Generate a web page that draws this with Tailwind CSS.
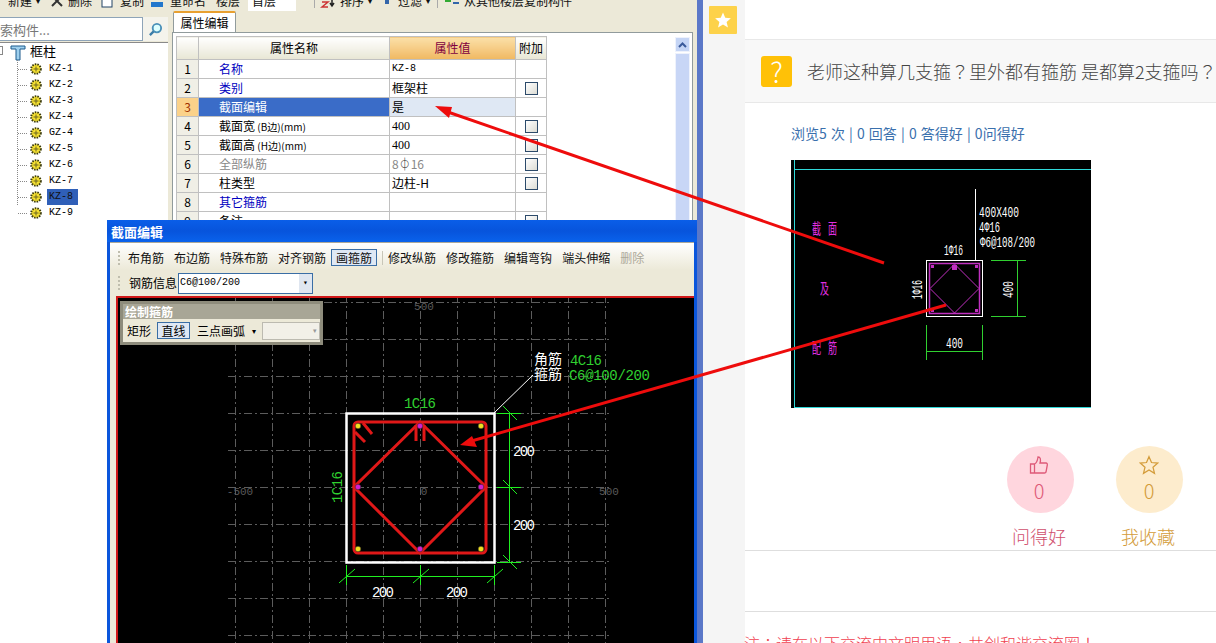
<!DOCTYPE html>
<html lang="zh-CN">
<head>
<meta charset="UTF-8">
<title>截面编辑</title>
<script src="https://cdn.jsdelivr.net/npm/@tailwindcss/browser@4"></script>
</head>
<body class="bg-white">
<svg class="hidden"><symbol id="gear" viewBox="0 0 12 12"><circle cx="6" cy="6" r="4.800" fill="#f5e030" stroke="#3a3a10" stroke-width="2" stroke-dasharray="1.500 1.100"/><path d="M3.500 6h5M6 3.500v5" stroke="#6a6420"/></symbol></svg>
<div class="relative flex w-[1216px] h-[643px] overflow-hidden text-[12px] leading-none text-black [font-family:'Noto_Sans_CJK_SC',sans-serif]">

  <!-- software screenshot -->
  <div class="relative w-[697px] h-full shrink-0 bg-[#ece9d8] overflow-hidden">
    <!-- top toolbar, cut off by the window edge -->
    <div class="h-[11px] overflow-hidden bg-[#ece9d8]">
      <div class="flex items-center h-px whitespace-nowrap text-[#111]">
        <span class="ml-[8px]">新建</span><span class="ml-[4px] text-[8px]">▾</span>
        <svg class="ml-[10px] w-[14px] h-[14px]" viewBox="0 0 14 14"><path d="M2 2l10 10M12 2L2 12" stroke="#333" stroke-width="2"/></svg>
        <span class="ml-[4px]">删除</span>
        <svg class="ml-[8px] w-[14px] h-[14px]" viewBox="0 0 14 14"><rect x="2" y="2" width="10" height="11" fill="#fff" stroke="#246"/></svg>
        <span class="ml-[6px]">复制</span>
        <svg class="ml-[6px] w-[14px] h-[14px]" viewBox="0 0 14 14"><rect x="1" y="8" width="12" height="5" fill="#27c" /></svg>
        <span class="ml-[6px]">重命名</span>
        <span class="ml-[10px]">楼层</span>
        <span class="ml-[8px] w-[48px] h-[22px] bg-white pl-[4px] pt-[5px]">首层</span>
        <span class="ml-[18px] w-px h-[14px] bg-[#aaa]"></span>
        <svg class="ml-[5px] w-[16px] h-[14px]" viewBox="0 0 16 14"><path d="M2 8h6L2 13h6" fill="none" stroke="#c33" stroke-width="1.500"/><path d="M12 2v10M10 9l2 3 2-3" fill="none" stroke="#222" stroke-width="1.500"/></svg>
        <span class="ml-[4px]">排序</span><span class="ml-[4px] text-[8px]">▾</span>
        <svg class="ml-[10px] w-[10px] h-[14px]" viewBox="0 0 10 14"><rect x="3" y="0" width="4" height="10" fill="#36a"/></svg>
        <span class="ml-[6px]">过滤</span><span class="ml-[4px] text-[8px]">▾</span>
        <span class="ml-[7px] w-px h-[14px] bg-[#aaa]"></span>
        <svg class="ml-[6px] w-[16px] h-[14px]" viewBox="0 0 16 14"><path d="M1 5h6v3H1z" fill="#3a3"/><path d="M9 1h6M9 5h6M9 9h6" stroke="#36a" stroke-width="2"/></svg>
        <span class="ml-[4px]">从其他楼层复制构件</span>
      </div>
    </div>

    <div class="flex h-[632px]">
      <!-- tree side -->
      <div class="w-[168px] shrink-0 flex flex-col">
        <div class="flex h-[31px] pt-[6px] pb-px">
          <div class="w-[143px] h-[24px] bg-white border border-[#8ea4b8] border-l-0 flex items-center text-[13px] text-[#777]">索构件...</div>
          <div class="w-[25px] h-[24px] flex items-center justify-center bg-[#f4f3ec]">
            <svg class="w-[15px] h-[15px]" viewBox="0 0 16 16"><circle cx="9.500" cy="6.500" r="4.500" fill="#dff" stroke="#4a90b8" stroke-width="2"/><path d="M6 10l-4 4" stroke="#3a7ca8" stroke-width="2.500"/></svg>
          </div>
        </div>
        <div class="flex-1 bg-white border-t border-[#8a8a8a] relative">
          <div class="flex items-center h-[14px] mb-[4px]">
            <span class="w-[3px] h-[9px] border border-[#888] border-l-0 bg-white"></span>
            <svg class="ml-[7px] mt-[5px] w-[16px] h-[16px]" viewBox="0 0 16 16"><path d="M1 1h14v3H10v11H6V4H1z" fill="#9fd0ee" stroke="#1c5a8c"/></svg>
            <span class="ml-[4px] text-[13px]">框柱</span>
          </div>
          <div class="absolute left-[17px] top-[17px] w-px h-[145px] border-l border-dotted border-[#888]"></div>
          <ul class="pl-[18px] text-[10px] [font-family:'Liberation_Mono',monospace]">
            <li class="flex items-center h-[16px]"><span class="w-[9px] border-t border-dotted border-[#888]"></span><svg class="ml-[3px] w-[12px] h-[12px]"><use href="#gear"/></svg><span class="ml-[7px]">KZ-1</span></li>
            <li class="flex items-center h-[16px]"><span class="w-[9px] border-t border-dotted border-[#888]"></span><svg class="ml-[3px] w-[12px] h-[12px]"><use href="#gear"/></svg><span class="ml-[7px]">KZ-2</span></li>
            <li class="flex items-center h-[16px]"><span class="w-[9px] border-t border-dotted border-[#888]"></span><svg class="ml-[3px] w-[12px] h-[12px]"><use href="#gear"/></svg><span class="ml-[7px]">KZ-3</span></li>
            <li class="flex items-center h-[16px]"><span class="w-[9px] border-t border-dotted border-[#888]"></span><svg class="ml-[3px] w-[12px] h-[12px]"><use href="#gear"/></svg><span class="ml-[7px]">KZ-4</span></li>
            <li class="flex items-center h-[16px]"><span class="w-[9px] border-t border-dotted border-[#888]"></span><svg class="ml-[3px] w-[12px] h-[12px]"><use href="#gear"/></svg><span class="ml-[7px]">GZ-4</span></li>
            <li class="flex items-center h-[16px]"><span class="w-[9px] border-t border-dotted border-[#888]"></span><svg class="ml-[3px] w-[12px] h-[12px]"><use href="#gear"/></svg><span class="ml-[7px]">KZ-5</span></li>
            <li class="flex items-center h-[16px]"><span class="w-[9px] border-t border-dotted border-[#888]"></span><svg class="ml-[3px] w-[12px] h-[12px]"><use href="#gear"/></svg><span class="ml-[7px]">KZ-6</span></li>
            <li class="flex items-center h-[16px]"><span class="w-[9px] border-t border-dotted border-[#888]"></span><svg class="ml-[3px] w-[12px] h-[12px]"><use href="#gear"/></svg><span class="ml-[7px]">KZ-7</span></li>
            <li class="flex items-center h-[16px]"><span class="w-[9px] border-t border-dotted border-[#888]"></span><svg class="ml-[3px] w-[12px] h-[12px]"><use href="#gear"/></svg><span class="ml-[5px] w-[31px] h-[16px] flex items-center pl-[2px] bg-[#2f5fb8] text-[#111]">KZ-8</span></li>
            <li class="flex items-center h-[16px]"><span class="w-[9px] border-t border-dotted border-[#888]"></span><svg class="ml-[3px] w-[12px] h-[12px]"><use href="#gear"/></svg><span class="ml-[7px]">KZ-9</span></li>
          </ul>
        </div>
      </div>

      <!-- property panel -->
      <div class="ml-[4px] w-[521px] flex flex-col">
        <div class="h-[21px] pl-px flex items-end">
          <div class="w-[63px] h-[21px] bg-white border border-[#919b9c] border-b-0 border-t-2 border-t-[#e8a030] rounded-t-[2px] flex items-center justify-center text-[12px]">属性编辑</div>
        </div>
        <div class="flex-1 bg-white border border-[#919b9c] pt-[3px] pl-[3px] pr-[2px] flex">
          <table class="w-[370px] h-fit table-fixed border-collapse self-start text-[12px]">
            <colgroup><col class="w-[22px]"><col class="w-[191px]"><col class="w-[126px]"><col class="w-[31px]"></colgroup>
            <thead>
              <tr class="h-[23px]">
                <th class="font-normal bg-gradient-to-b from-white to-[#e8e6d4] border border-[#c0c0c0]"></th>
                <th class="font-normal bg-gradient-to-b from-white to-[#e8e6d4] border border-[#c0c0c0]">属性名称</th>
                <th class="font-normal bg-gradient-to-b from-[#fbe0a8] to-[#f0b860] border border-[#c0c0c0] text-[#800040]">属性值</th>
                <th class="font-normal bg-gradient-to-b from-white to-[#e8e6d4] border border-[#c0c0c0]">附加</th>
              </tr>
            </thead>
            <tbody>
              <tr class="h-[19px]">
                <td class="bg-[#f0efe6] border border-[#c0c0c0] text-center">1</td>
                <td class="border border-[#c0c0c0] pl-[20px] text-[#0000c0]">名称</td>
                <td class="border border-[#c0c0c0] pl-[2px] text-[10px] [font-family:'Liberation_Mono',monospace]">KZ-8</td>
                <td class="border border-[#c0c0c0]"></td>
              </tr>
              <tr class="h-[19px]">
                <td class="bg-[#f0efe6] border border-[#c0c0c0] text-center">2</td>
                <td class="border border-[#c0c0c0] pl-[20px] text-[#0000c0]">类别</td>
                <td class="border border-[#c0c0c0] pl-[2px]">框架柱</td>
                <td class="border border-[#c0c0c0]"><span class="block mx-auto w-[13px] h-[13px] border border-[#2c4a6a] bg-gradient-to-br from-white to-[#dcdcd4]"></span></td>
              </tr>
              <tr class="h-[19px]">
                <td class="bg-[#fbd28a] border border-[#c0c0c0] text-center text-[#a03000]">3</td>
                <td class="bg-[#3a6cc8] border border-[#c0c0c0] pl-[20px] text-white">截面编辑</td>
                <td class="bg-[#dfe8f4] border border-[#c0c0c0] pl-[2px]">是</td>
                <td class="border border-[#c0c0c0]"></td>
              </tr>
              <tr class="h-[19px]">
                <td class="bg-[#f0efe6] border border-[#c0c0c0] text-center">4</td>
                <td class="border border-[#c0c0c0] pl-[20px]">截面宽<span class="text-[10px]"> (B边)(mm)</span></td>
                <td class="border border-[#c0c0c0] pl-[2px] [font-family:'Liberation_Serif',serif]">400</td>
                <td class="border border-[#c0c0c0]"><span class="block mx-auto w-[13px] h-[13px] border border-[#2c4a6a] bg-gradient-to-br from-white to-[#dcdcd4]"></span></td>
              </tr>
              <tr class="h-[19px]">
                <td class="bg-[#f0efe6] border border-[#c0c0c0] text-center">5</td>
                <td class="border border-[#c0c0c0] pl-[20px]">截面高<span class="text-[10px]"> (H边)(mm)</span></td>
                <td class="border border-[#c0c0c0] pl-[2px] [font-family:'Liberation_Serif',serif]">400</td>
                <td class="border border-[#c0c0c0]"><span class="block mx-auto w-[13px] h-[13px] border border-[#2c4a6a] bg-gradient-to-br from-white to-[#dcdcd4]"></span></td>
              </tr>
              <tr class="h-[19px]">
                <td class="bg-[#f0efe6] border border-[#c0c0c0] text-center">6</td>
                <td class="border border-[#c0c0c0] pl-[20px] text-[#888]">全部纵筋</td>
                <td class="border border-[#c0c0c0] pl-[2px] text-[#888]">8<span class="text-[#222]">⏀</span>16</td>
                <td class="border border-[#c0c0c0]"><span class="block mx-auto w-[13px] h-[13px] border border-[#2c4a6a] bg-gradient-to-br from-white to-[#dcdcd4]"></span></td>
              </tr>
              <tr class="h-[19px]">
                <td class="bg-[#f0efe6] border border-[#c0c0c0] text-center">7</td>
                <td class="border border-[#c0c0c0] pl-[20px]">柱类型</td>
                <td class="border border-[#c0c0c0] pl-[2px]">边柱-H</td>
                <td class="border border-[#c0c0c0]"><span class="block mx-auto w-[13px] h-[13px] border border-[#2c4a6a] bg-gradient-to-br from-white to-[#dcdcd4]"></span></td>
              </tr>
              <tr class="h-[19px]">
                <td class="bg-[#f0efe6] border border-[#c0c0c0] text-center">8</td>
                <td class="border border-[#c0c0c0] pl-[20px] text-[#0000c0]">其它箍筋</td>
                <td class="border border-[#c0c0c0]"></td>
                <td class="border border-[#c0c0c0]"></td>
              </tr>
              <tr class="h-[19px]">
                <td class="bg-[#f0efe6] border border-[#c0c0c0] text-center">9</td>
                <td class="border border-[#c0c0c0] pl-[20px]">备注</td>
                <td class="border border-[#c0c0c0]"></td>
                <td class="border border-[#c0c0c0]"><span class="block mx-auto w-[13px] h-[13px] border border-[#2c4a6a] bg-gradient-to-br from-white to-[#dcdcd4]"></span></td>
              </tr>
            </tbody>
          </table>
          <!-- scrollbar -->
          <div class="ml-auto mt-px w-[15px] flex flex-col">
            <div class="h-[15px] bg-[#c5d5f5] border border-[#eef2fc] flex items-center justify-center">
              <svg class="w-[9px] h-[6px]" viewBox="0 0 9 6"><path d="M1 5l3.500-3.500L8 5" fill="none" stroke="#3a5a9a" stroke-width="2"/></svg>
            </div>
            <div class="mt-px flex-1 bg-[#c8d6f6] border border-[#eef2fc]"></div>
          </div>
        </div>
      </div>
    </div>

    <!-- section editor window, floats over the panels -->
    <div class="absolute left-[107px] top-[220px] w-[590px] h-[423px] flex flex-col border-x-[3px] border-[#0a56dc] bg-[#ece9d8]">
      <div class="h-[22px] -mx-[3px] shrink-0 bg-gradient-to-b from-[#0a5ee8] via-[#0754dc] to-[#0a62ec] flex items-center pl-[4px] text-[13px] font-bold text-white">截面编辑</div>
      <div class="h-px shrink-0 bg-[#aca899]"></div>
      <div class="h-[27px] shrink-0 flex items-center pt-[2px] pl-[8px] gap-[10px] bg-gradient-to-b from-white to-[#ece9d8] text-[#111]">
        <span class="w-[2px] h-[14px] -mr-[2px] border-l-2 border-dotted border-[#c0beae]"></span>
        <span>布角筋</span><span>布边筋</span><span>特殊布筋</span><span>对齐钢筋</span>
        <span class="-mx-[5px] px-[4px] h-[17px] flex items-center bg-[#dfe8f4] border border-[#3a6ea5]">画箍筋</span>
        <span class="w-px h-[14px] bg-[#c8c6b8]"></span>
        <span class="-ml-[5px]">修改纵筋</span><span>修改箍筋</span><span>编辑弯钩</span><span>端头伸缩</span><span class="text-[#aca899]">删除</span>
      </div>
      <div class="h-[26px] shrink-0 flex items-center pl-[8px]">
        <span class="w-[2px] h-[14px] border-l-2 border-dotted border-[#c0beae]"></span>
        <span class="ml-[9px]">钢筋信息</span>
        <span class="ml-px w-[135px] h-[21px] bg-white border border-[#3a6ea5] flex items-center justify-between pl-px text-[10px] [font-family:'Liberation_Mono',monospace]">C6@100/200
          <span class="w-[13px] h-full bg-[#dfe6f0] flex items-center justify-center text-[8px]">▾</span>
        </span>
      </div>
      <!-- drawing canvas -->
      <div class="relative flex-1 ml-[6px] border-2 border-b-0 border-r-0 border-[#d01818] bg-black">
        <svg class="block w-[578px] h-[345px]" viewBox="118 298 578 345" font-family="Liberation Mono, monospace">
          <g stroke="#5c5c5c" stroke-dasharray="8 3 2 3" fill="none" shape-rendering="crispEdges">
            <path d="M235 295V643M272 295V643M309 295V643M346 295V643M383 295V643M420 295V643M457 295V643M494 295V643M531 295V643M568 295V643M605 295V643"/>
            <path d="M228 302H612M228 339H612M228 376H612M228 413H612M228 450H612M228 487H612M228 524H612M228 561H612M228 598H612M228 635H612"/>
          </g>
          <g fill="#5a5a5a" font-size="11" text-anchor="middle">
            <text x="424" y="310">500</text><text x="240" y="495">-500</text><text x="424" y="495">0</text><text x="609" y="495">500</text>
          </g>
          <rect x="346.500" y="413.500" width="148" height="149" fill="none" stroke="#fff" stroke-width="2.500"/>
          <path d="M494 413L533 375" stroke="#fff"/>
          <g stroke="#20f020" fill="none">
            <path shape-rendering="crispEdges" d="M509 413V562M497 413H521M497 487H521M497 562H521M346 576H494M346 565V585M420 565V585M494 565V585"/>
            <path d="M503 406L517 420M503 480L517 494M503 555L517 569M339 583L355 569M413 583L429 569M487 583L503 569"/>
          </g>
          <g stroke="#e01818" fill="none" stroke-width="3">
            <rect x="354" y="422" width="132" height="131" rx="4"/>
            <path d="M420 422L486 487L420 553L354 487Z"/>
            <path d="M363 423L372 434M355 432L365 442M416 425V441M424 425V441"/>
          </g>
          <g fill="#f0e020" stroke="#222" stroke-width="0.500">
            <circle cx="358" cy="426" r="2.800"/><circle cx="481" cy="426" r="2.800"/><circle cx="358" cy="549" r="2.800"/><circle cx="481" cy="549" r="2.800"/>
          </g>
          <g fill="#d020d0" stroke="#222" stroke-width="0.500">
            <circle cx="420" cy="426" r="2.800"/><circle cx="358" cy="487" r="2.800"/><circle cx="481" cy="487" r="2.800"/><circle cx="420" cy="549" r="2.800"/>
          </g>
          <g fill="#30d030" font-size="14">
            <text x="404" y="408" textLength="32">1C16</text>
            <text transform="translate(342 503) rotate(-90)" textLength="32">1C16</text>
            <text x="570" y="365" textLength="32">4C16</text>
            <text x="569" y="380" textLength="81">C6@100/200</text>
          </g>
          <g fill="#fff" font-size="14">
            <text x="513" y="456" textLength="22">200</text><text x="513" y="530" textLength="22">200</text>
            <text x="372" y="597" textLength="22">200</text><text x="446" y="597" textLength="22">200</text>
            <text x="534" y="364" font-size="14" font-family="Noto Sans CJK SC, sans-serif">角筋</text>
            <text x="534" y="379" font-size="14" font-family="Noto Sans CJK SC, sans-serif">箍筋</text>
          </g>
        </svg>
        <!-- floating tool panel -->
        <div class="absolute left-[2px] top-[3px] w-[203px] h-[44px] border-[3px] border-[#8e8c7c] bg-[#ece9d8] flex flex-col">
          <div class="h-[15px] bg-[#a8a696] flex items-center pl-[2px] font-bold text-white">绘制箍筋</div>
          <div class="flex-1 flex items-center pl-[4px]">
            <span>矩形</span>
            <span class="ml-[6px] w-[33px] h-[17px] bg-[#dfe8f4] border border-[#3a6ea5] flex items-center justify-center">直线</span>
            <span class="ml-[7px]">三点画弧</span>
            <span class="ml-[7px] text-[8px]">▾</span>
            <span class="ml-[6px] w-[58px] h-[18px] border border-[#bcbab0] bg-[#f2f0e8] flex items-center justify-end pr-[2px] text-[7px] text-[#999]">▾</span>
          </div>
        </div>
      </div>
    </div>
  </div>

  <!-- window edge and web page side bar -->
  <div class="w-[6px] shrink-0 bg-[#5b78c8]"></div>
  <div class="w-[42px] shrink-0 bg-[#f5f5f5] pt-[6px] pl-[6px]">
    <div class="w-[28px] h-[28px] bg-[#fdd24a] flex items-center justify-center rounded-[1px]">
      <svg class="w-[18px] h-[18px]" viewBox="0 0 24 24"><path d="M12 2l3 7 7.500 .7-5.700 4.900 1.800 7.400L12 18l-6.600 4 1.800-7.400L1.500 9.700 9 9z" fill="#fff"/></svg>
    </div>
  </div>

  <!-- question page -->
  <div class="flex-1 min-w-0 flex flex-col [font-family:'Noto_Sans_CJK_SC',sans-serif]">
    <div class="h-[39px] shrink-0 bg-white"></div>
    <div class="h-[64px] shrink-0 bg-[#f8f8f8] border-y border-[#e8e8e8] flex items-center pl-[16px] overflow-hidden whitespace-nowrap">
      <div class="w-[31px] h-[31px] shrink-0 bg-[#ffc107] rounded-[3px] flex items-center justify-center text-[28px] font-light text-white">?</div>
      <h1 class="ml-[15px] text-[18px] font-light text-[#444]">老师这种算几支箍<span lang="zh-TW" class="[font-family:'Noto_Sans_CJK_TC',sans-serif]">？</span>里外都有箍筋 是都算2支箍吗<span lang="zh-TW" class="[font-family:'Noto_Sans_CJK_TC',sans-serif]">？</span></h1>
    </div>
    <p class="mt-[22px] pl-[46px] h-[16px] text-[14px] leading-[16px] font-normal [word-spacing:1px] text-[#3a70ad] whitespace-nowrap">浏览5 次 | 0 回答 | 0 答得好 | 0问得好</p>
    <!-- attached drawing -->
    <svg class="mt-[19px] ml-[46px] w-[300px] h-[248px] shrink-0 bg-black" viewBox="791 160 300 248" font-family="Liberation Mono, monospace">
      <path shape-rendering="crispEdges" d="M794 160V408M794 169H1091M794 407H1091" stroke="#30d8d8" fill="none"/>
      <rect x="926.500" y="260.500" width="56" height="56" fill="none" stroke="#fff"/>
      <rect x="929.500" y="263.500" width="50" height="50" fill="none" stroke="#c030c0" stroke-width="1.500"/>
      <path d="M954.500 264L979 288.500L954.500 313L930 288.500Z" fill="none" stroke="#c030c0"/>
      <path shape-rendering="crispEdges" d="M975 189V260" stroke="#fff"/>
      <g fill="#c030c0"><rect x="931" y="265" width="3" height="3"/><rect x="975" y="265" width="3" height="3"/><rect x="931" y="309" width="3" height="3"/><rect x="975" y="309" width="3" height="3"/><rect x="952" y="265" width="5" height="5"/></g>
      <path shape-rendering="crispEdges" d="M991 260H1026M991 316H1026M1017 260V316M926 325V360M982 325V360M926 351H983" stroke="#30d030" fill="none"/>
      <g fill="#fff" font-size="15">
        <text x="979" y="217" textLength="40" lengthAdjust="spacingAndGlyphs">400X400</text>
        <text x="979" y="232" textLength="21" lengthAdjust="spacingAndGlyphs">4Φ16</text>
        <text x="980" y="247" textLength="55" lengthAdjust="spacingAndGlyphs">Φ6@108/200</text>
        <text x="944" y="255" textLength="19" lengthAdjust="spacingAndGlyphs">1Φ16</text>
        <text transform="translate(922 299) rotate(-90)" textLength="19" lengthAdjust="spacingAndGlyphs">1Φ16</text>
        <text transform="translate(1013 298) rotate(-90)" textLength="17" lengthAdjust="spacingAndGlyphs">400</text>
        <text x="946" y="348" textLength="17" lengthAdjust="spacingAndGlyphs">400</text>
      </g>
      <g fill="#e030e0" font-size="15" font-family="Noto Sans CJK SC, sans-serif">
        <text x="812" y="234" textLength="9" lengthAdjust="spacingAndGlyphs">截</text><text x="828" y="234" textLength="9" lengthAdjust="spacingAndGlyphs">面</text><text x="820" y="294" textLength="9" lengthAdjust="spacingAndGlyphs">及</text><text x="812" y="353" textLength="9" lengthAdjust="spacingAndGlyphs">配</text><text x="828" y="353" textLength="9" lengthAdjust="spacingAndGlyphs">筋</text>
      </g>
    </svg>
    <!-- like and favourite -->
    <div class="mt-[38px] pl-[262px] flex gap-[42px] shrink-0">
      <div class="w-[67px] flex flex-col items-center">
        <div class="w-[67px] h-[67px] rounded-full bg-[#ffd6de] flex flex-col items-center pt-[9px] pr-[3px] text-[#de5a78]">
          <svg class="w-[20px] h-[20px]" viewBox="0 0 20 20"><path d="M1.500 9h4v9h-4zM5.500 9c2-1 3-3 3.500-7 2.500 0 3 2.500 2 6h6c1 0 1.500 1 1.300 2l-1.300 7c-.2.700-.8 1-1.500 1h-10" fill="none" stroke="currentColor" stroke-width="1.300"/></svg>
          <span class="mt-[6px] text-[20px] leading-[20px] font-light">0</span>
        </div>
        <span class="mt-[12px] pr-[3px] text-[18px] leading-[22px] font-light text-[#d04e6c] whitespace-nowrap">问得好</span>
      </div>
      <div class="w-[67px] flex flex-col items-center">
        <div class="w-[67px] h-[67px] rounded-full bg-[#fdeccd] flex flex-col items-center pt-[9px] pr-px text-[#d49c3a]">
          <svg class="w-[20px] h-[20px]" viewBox="0 0 24 24"><path d="M12 2l3 7 7.500 .7-5.700 4.900 1.800 7.400L12 18l-6.600 4 1.800-7.400L1.500 9.700 9 9z" fill="none" stroke="currentColor" stroke-width="1.500"/></svg>
          <span class="mt-[6px] text-[20px] leading-[20px] font-light">0</span>
        </div>
        <span class="mt-[12px] pr-[3px] text-[18px] leading-[22px] font-light text-[#d49c3a] whitespace-nowrap">我收藏</span>
      </div>
    </div>
    <div class="mt-[3px] h-[62px] shrink-0 border-y border-[#dedede]"></div>
    <p class="mt-[20px] -ml-px text-[16px] leading-[22px] font-light text-[#f04050] whitespace-nowrap">注<span lang="zh-TW" class="[font-family:'Noto_Sans_CJK_TC',sans-serif]">：</span>请在以下交流中文明用语<span lang="zh-TW" class="[font-family:'Noto_Sans_CJK_TC',sans-serif]">，</span>共创和谐交流圈<span lang="zh-TW" class="[font-family:'Noto_Sans_CJK_TC',sans-serif]">！</span></p>
  </div>

  <!-- red annotation arrows over everything -->
  <svg class="absolute inset-0 w-[1216px] h-[643px] pointer-events-none" viewBox="0 0 1216 643">
    <g stroke="#ee0c0c" stroke-width="3" fill="#ee0c0c">
      <path d="M884 263L445 111" fill="none"/>
      <path d="M946 305L468 442" fill="none"/>
      <path stroke="none" d="M435 106L452 107L449 118Z"/>
      <path stroke="none" d="M460 445L472 436L477 447Z"/>
    </g>
  </svg>
</div>
</body>
</html>
